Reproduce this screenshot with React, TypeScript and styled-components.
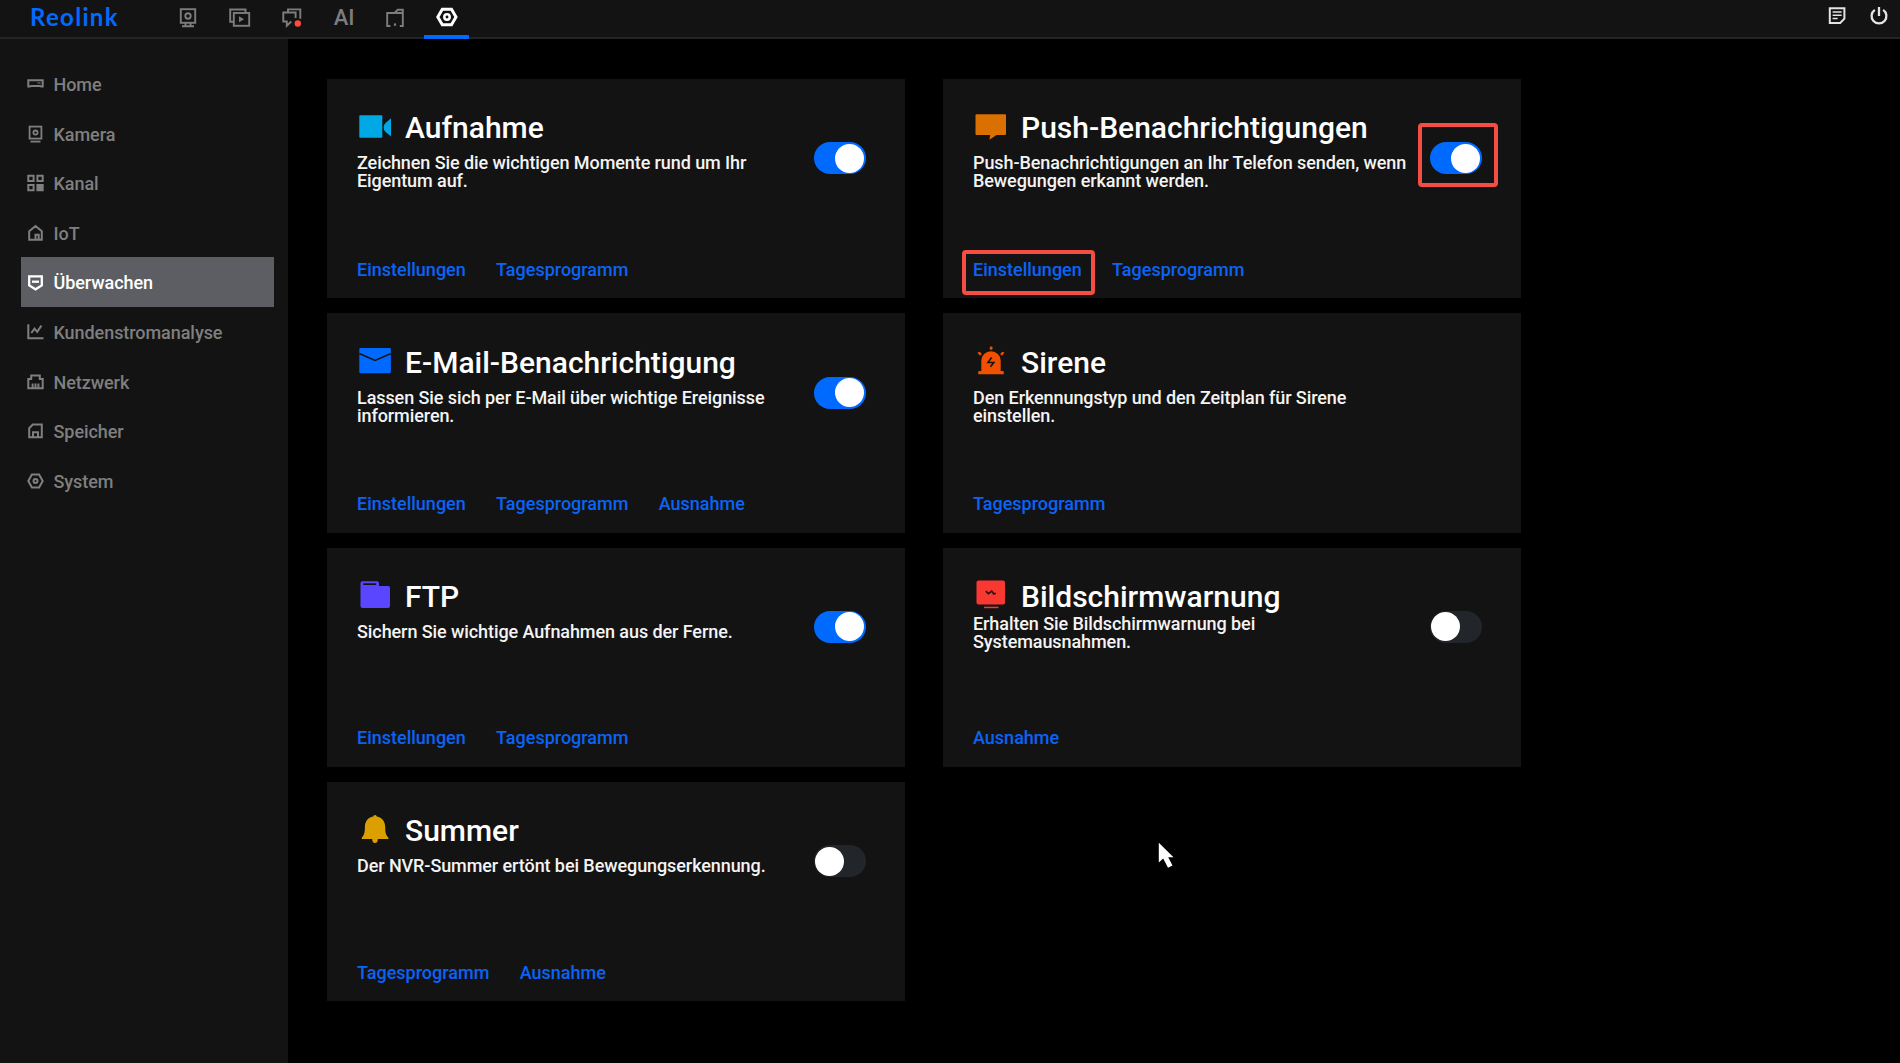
import React from 'react';
import styled, { createGlobalStyle } from 'styled-components';

const GlobalStyle = createGlobalStyle`
  * { box-sizing: border-box; }
  html, body { margin: 0; background: #000; overflow: hidden; }
  body { font-family: Roboto, "Liberation Sans", sans-serif; }
`;

const Screen = styled.div`
  display: flex;
  flex-direction: column;
  width: 1900px;
  height: 1063px;
  background: #000;
  overflow: hidden;
`;

const Header = styled.header`
  display: flex;
  align-items: flex-start;
  height: 39px;
  flex: none;
  background: #131313;
  border-bottom: 2px solid #242424;
`;

const Logo = styled.div`
  width: 136px;
  padding-left: 30px;
  font: 700 24px/34px Lato, sans-serif;
  letter-spacing: 1.3px;
  color: #006aff;
`;

const Tabs = styled.nav`
  display: flex;
  gap: 6.7px;
  padding-left: 30px;
  flex: 1;
`;

const Tab = styled.a<{ $active?: boolean }>`
  position: relative;
  display: flex;
  align-items: center;
  justify-content: center;
  width: 45px;
  height: 35px;
  color: ${(p) => (p.$active ? '#fff' : '#7d7d7d')};
  &::after {
    content: '';
    display: ${(p) => (p.$active ? 'block' : 'none')};
    position: absolute;
    left: 0;
    right: 0;
    top: 34.5px;
    height: 4.5px;
    background: #006aff;
  }
`;

const TabText = styled.span`
  padding-left: 1px;
  font-size: 22px;
  font-weight: 500;
  line-height: 35px;
`;

const Actions = styled.div`
  display: flex;
  align-items: center;
  gap: 24px;
  height: 31px;
  padding-right: 12px;
  color: #e4e4e4;
`;

const Body = styled.div`
  display: flex;
  flex: 1;
  min-height: 0;
`;

const Sidebar = styled.nav`
  width: 288px;
  padding: 19.9px 14px 0 21.4px;
  background: #131313;
`;

const SideItem = styled.a<{ $active?: boolean }>`
  display: flex;
  align-items: center;
  gap: 9.6px;
  height: 49.6px;
  padding: 1.6px 0 0 5.5px;
  font-size: 18px;
  font-weight: 500;
  letter-spacing: -0.06px;
  color: ${(p) => (p.$active ? '#fff' : '#7f7f7f')};
  background: ${(p) => (p.$active ? '#5c5e63' : 'transparent')};
`;

const Glyph = styled.svg`
  display: block;
  flex: none;
  overflow: visible;
`;

const SideIcon = styled.span`
  display: flex;
  margin-top: -0.6px;
`;

const Main = styled.main`
  display: flex;
  align-items: flex-start;
  gap: 38px;
  padding: 40px 0 0 39px;
`;

const Column = styled.div`
  display: flex;
  flex-direction: column;
  gap: 15.2px;
`;

const CardBox = styled.section`
  display: flex;
  flex-direction: column;
  justify-content: space-between;
  width: 578px;
  height: 219.2px;
  padding: 31.2px 39.3px 18.6px 30px;
  background: #131313;
`;

const CardTop = styled.div`
  display: flex;
  justify-content: space-between;
`;

const CardText = styled.div`
  flex: none;
`;

const Title = styled.h2`
  display: flex;
  align-items: center;
  gap: 12px;
  margin: 0;
  font-size: 30px;
  font-weight: 500;
  line-height: 36px;
  color: #fff;
`;

const IconSlot = styled.span`
  display: flex;
  margin-top: -3px;
`;

const Description = styled.p<{ $tight?: boolean }>`
  margin: ${(p) => (p.$tight ? '0' : '8px')} 0 0;
  font-size: 18px;
  font-weight: 500;
  line-height: 18px;
  letter-spacing: -0.085px;
  white-space: pre-line;
  color: #f4f4f4;
`;

const SwitchArea = styled.div`
  position: relative;
  align-self: flex-start;
  margin-top: 32px;
  margin-left: -40px;
`;

const Switch = styled.button<{ $on: boolean }>`
  display: flex;
  justify-content: ${(p) => (p.$on ? 'flex-end' : 'flex-start')};
  align-items: center;
  width: 52px;
  height: 32px;
  padding: 0 1.5px;
  border: 0;
  border-radius: 16px;
  background: ${(p) => (p.$on ? '#006aff' : '#22252a')};
`;

const Knob = styled.span`
  width: 29px;
  height: 29px;
  border-radius: 50%;
  background: #fff;
`;

const Links = styled.div`
  display: flex;
  gap: 30.3px;
`;

const Link = styled.a`
  position: relative;
  font-size: 18px;
  font-weight: 500;
  line-height: 20px;
  color: #0b63f6;
`;

const Highlight = styled.span<{ $inset: string }>`
  position: absolute;
  inset: ${(p) => p.$inset};
  border: 4px solid #f44d43;
  border-radius: 4px;
`;

const Pointer = styled.div`
  position: absolute;
  left: 1158px;
  top: 842px;
`;

type IconProps = { w: number; h: number; children: React.ReactNode; sw?: number };
const Line = ({ w, h, sw = 2, children }: IconProps) => (
  <Glyph width={w} height={h} viewBox={`0 0 ${w} ${h}`} fill="none" stroke="currentColor" strokeWidth={sw}>
    {children}
  </Glyph>
);

const topTabs = [
  <Line w={19} h={20} sw={1.9}>
    <rect x="1.8" y="1.2" width="14.4" height="13.6" />
    <circle cx="9" cy="8" r="2.7" />
    <path d="M6.5 15v2.6M11.5 15v2.6M3 18.3h12" />
  </Line>,
  <Line w={22} h={20} sw={1.9}>
    <path d="M16.5 4V1.5H1.2v12.3h3.3" />
    <rect x="4.8" y="5" width="15.4" height="12.8" />
    <path d="M10 8.2v6l5-3z" fill="currentColor" stroke="none" />
  </Line>,
  <Line w={20} h={20} sw={1.9}>
    <path d="M6 4V1.4h12.3v9.4M13.6 10V4.5H1.3v9H4.8v4.2l4.5-4.2" />
    <circle cx="15.8" cy="15.5" r="3.2" fill="#ff4b3e" stroke="none" />
  </Line>,
  <TabText>AI</TabText>,
  <Line w={18} h={20} sw={1.9}>
    <path d="M4.4 18H1.2V5h7.3l3.3-3.3h5V18h-3M9.5 5h7.3" />
    <path d="M7.9 15.4h2.2v2.4H7.9z" fill="currentColor" stroke="none" />
  </Line>,
  <Line w={21} h={21} sw={3}>
    <path d="M6.3 2.2h9.2L20 10l-4.5 7.8H6.3L1.8 10z" />
    <circle cx="11" cy="10" r="2.7" strokeWidth="2.5" />
  </Line>,
];

const sideItems = [
  { label: 'Home', icon: <Line w={17} h={18}><path d="M1.3 5.2h14.4v6.3h-1.6l-1-.6H4l-1 .6H1.3z" /><path d="M10.5 8h3" strokeWidth="1" /></Line> },
  { label: 'Kamera', icon: <Line w={17} h={18} sw={1.8}><rect x="2.6" y="1.6" width="11.8" height="12" /><circle cx="8.5" cy="7.6" r="2.1" /><path d="M3.5 16.6h10" /></Line> },
  { label: 'Kanal', icon: <Line w={17} h={18}><path d="M1.3 1.8h5.3v5.3h-5.3zM10.4 1.8h5.3v5.3h-5.3zM1.3 10.9h5.3v5.3h-5.3z" /><path d="M10.4 10.9h5.3v5.3h-5.3z" fill="currentColor" /></Line> },
  { label: 'IoT', icon: <Line w={17} h={18}><path d="M2.2 7.2 8.5 2l6.3 5.2v8.6H2.2zM8.5 15.8v-5h3.2v5" /></Line> },
  { label: 'Überwachen', icon: <Line w={17} h={18} sw={2.3}><path d="M2.2 2.4h12.6v9L8.5 15.3 2.2 11.4z" /><path d="M5 7.7h7" /></Line> },
  { label: 'Kundenstromanalyse', icon: <Line w={17} h={18}><path d="M1.3 1.3v13.9h15.2M4.3 10l3.2-4.4 2.7 3.3 4.2-6.3" /></Line> },
  { label: 'Netzwerk', icon: <Line w={17} h={18}><path d="M1.3 15.2V6h2.9V2.6h8.6V6h2.9v9.2zM5.6 15v-4.4M8.5 15v-4.4M11.4 15v-4.4" /></Line> },
  { label: 'Speicher', icon: <Line w={17} h={18}><path d="M2.2 15.2V6.2l3.6-3.6h9v12.6zM6 15v-4.8h5V15" /></Line> },
  { label: 'System', icon: <Line w={17} h={18}><path d="M4.9 2.4h7.2L15.7 9l-3.6 6.5H4.9L1.3 9z" /><circle cx="8.5" cy="9" r="2" /></Line> },
];

const Solid = ({ color, children }: { color: string; children: React.ReactNode }) => (
  <Glyph width="36" height="32" viewBox="0 0 36 32" fill={color}>{children}</Glyph>
);

const icons = {
  record: (
    <Solid color="#00a8e6">
      <rect x="2.3" y="4.2" width="23" height="22.6" rx="1" />
      <path d="M34 7.2v18.2l-5.4-4.3q-2-1.6-2-4.5t2-4.6z" />
    </Solid>
  ),
  push: <Solid color="#d97000"><path d="M3.5 3.2h28.5a1 1 0 0 1 1 1v18.8a1 1 0 0 1-1 1H23.5l-7 4.8.6-4.8H3.5a1 1 0 0 1-1-1v-18.8a1 1 0 0 1 1-1z" /></Solid>,
  mail: (
    <Solid color="#006aff">
      <path d="M3.4 3h29.4a1.1 1.1 0 0 1 1.1 1.1v23a1.1 1.1 0 0 1-1.1 1.1H3.4a1.1 1.1 0 0 1-1.1-1.1v-23A1.1 1.1 0 0 1 3.4 3z" />
      <path d="M2.3 8.5 18 15.5l16-7" fill="none" stroke="#131313" strokeWidth="1.5" />
    </Solid>
  ),
  siren: (
    <Solid color="#f05000">
      <path d="M8.3 26V15.5a9.7 9.2 0 0 1 19.4 0V26h2.1a1 1 0 0 1 1 1v2.2H5.2V27a1 1 0 0 1 1-1z" />
      <rect x="16.7" y="1.5" width="2.8" height="3.2" rx="1" />
      <path d="m4.5 7.4 2.4-.6 2 2.8-2.2.9zM31.5 7.4l-2.4-.6-2 2.8 2.2.9z" />
      <path d="m18.6 12.5-3.6 5h5.8l-3.4 4.3" fill="none" stroke="#131313" strokeWidth="1.6" />
    </Solid>
  ),
  ftp: (
    <Solid color="#5a46ff">
      <path d="M5.5 2.3h14.5a2 2 0 0 1 2 2v2.7h9a2 2 0 0 1 2 2v18a2 2 0 0 1-2 2h-25.500a2 2 0 0 1-2-2v-22.700a2 2 0 0 1 2-2z" />
      <path d="M6.2 4.3h13v1.7h-13z" fill="#131313" />
    </Solid>
  ),
  screen: (
    <Solid color="#f93832">
      <rect x="3.5" y="1.5" width="28.5" height="24" rx="2" />
      <path d="M11 27.700h14.500v1.500H11z" />
      <path d="m12.8 12.1 2.6 2.6 3.3-2.6 2.1 2.8 2-.6" fill="none" stroke="#2a1010" strokeWidth="1.7" />
    </Solid>
  ),
  bell: (
    <Solid color="#dba000">
      <path d="M18 .9c1.200 0 1.500.8 1.800 1.600C25 3.600 28.200 7.500 28.200 13c0 5.500.8 8.300 3.200 10.600V25H20.800q0 4-2.800 4t-2.800-4H4.800v-1.400C7 21.300 7.900 18.500 7.900 13c0-5.500 3-9.400 8.300-10.500.3-.8.600-1.600 1.800-1.600z" />
    </Solid>
  ),
};

type CardData = {
  icon: React.ReactNode;
  title: string;
  text: string;
  on?: boolean;
  links: string[];
  tight?: boolean;
  marked?: boolean;
};

const left: CardData[] = [
  { icon: icons.record, title: 'Aufnahme', text: 'Zeichnen Sie die wichtigen Momente rund um Ihr\nEigentum auf.', on: true, links: ['Einstellungen', 'Tagesprogramm'] },
  { icon: icons.mail, title: 'E-Mail-Benachrichtigung', text: 'Lassen Sie sich per E-Mail über wichtige Ereignisse\ninformieren.', on: true, links: ['Einstellungen', 'Tagesprogramm', 'Ausnahme'] },
  { icon: icons.ftp, title: 'FTP', text: 'Sichern Sie wichtige Aufnahmen aus der Ferne.', on: true, links: ['Einstellungen', 'Tagesprogramm'] },
  { icon: icons.bell, title: 'Summer', text: 'Der NVR-Summer ertönt bei Bewegungserkennung.', on: false, links: ['Tagesprogramm', 'Ausnahme'] },
];

const right: CardData[] = [
  { icon: icons.push, title: 'Push-Benachrichtigungen', text: 'Push-Benachrichtigungen an Ihr Telefon senden, wenn\nBewegungen erkannt werden.', on: true, links: ['Einstellungen', 'Tagesprogramm'], marked: true },
  { icon: icons.siren, title: 'Sirene', text: 'Den Erkennungstyp und den Zeitplan für Sirene\neinstellen.', links: ['Tagesprogramm'] },
  { icon: icons.screen, title: 'Bildschirmwarnung', text: 'Erhalten Sie Bildschirmwarnung bei\nSystemausnahmen.', on: false, links: ['Ausnahme'], tight: true },
];

const Card = ({ icon, title, text, on, links, tight, marked }: CardData) => (
  <CardBox>
    <CardTop>
      <CardText>
        <Title><IconSlot>{icon}</IconSlot>{title}</Title>
        <Description $tight={tight}>{text}</Description>
      </CardText>
      {on !== undefined && (
        <SwitchArea>
          <Switch $on={on}><Knob /></Switch>
          {marked && <Highlight $inset="-19px -16px -13px -11.8px" />}
        </SwitchArea>
      )}
    </CardTop>
    <Links>
      {links.map((label, i) => (
        <Link key={label}>
          {label}
          {marked && i === 0 && <Highlight $inset="-10px -12.8px -15px -11.5px" />}
        </Link>
      ))}
    </Links>
  </CardBox>
);

export default function App() {
  return (
    <Screen>
      <GlobalStyle />
      <Header>
        <Logo>Reolink</Logo>
        <Tabs>
          {topTabs.map((icon, i) => (
            <Tab key={i} $active={i === 5}>{icon}</Tab>
          ))}
        </Tabs>
        <Actions>
          <Line w={18} h={18}>
            <path d="M1.8 1.3h14.6v10.4l-4.2 4.2H1.8z" />
            <path d="M4.6 5h9M4.6 8.3h9M4.6 11.5h5" strokeWidth="1.6" />
          </Line>
          <Line w={18} h={18} sw={2.3}>
            <path d="M4.8 2.9a7.4 7.4 0 1 0 8.4 0M9 .1v9" />
          </Line>
        </Actions>
      </Header>
      <Body>
        <Sidebar>
          {sideItems.map((item) => (
            <SideItem key={item.label} $active={item.label === 'Überwachen'}>
              <SideIcon>{item.icon}</SideIcon>
              {item.label}
            </SideItem>
          ))}
        </Sidebar>
        <Main>
          <Column>{left.map((c) => <Card key={c.title} {...c} />)}</Column>
          <Column>{right.map((c) => <Card key={c.title} {...c} />)}</Column>
        </Main>
      </Body>
      <Pointer>
        <Glyph width="17" height="27" viewBox="0 0 17 27" fill="#fff">
          <path d="M.8.8v19.7l4.4-4 4.8 9.3 4.5-2.2-4.3-8.4h5.3z" />
        </Glyph>
      </Pointer>
    </Screen>
  );
}
